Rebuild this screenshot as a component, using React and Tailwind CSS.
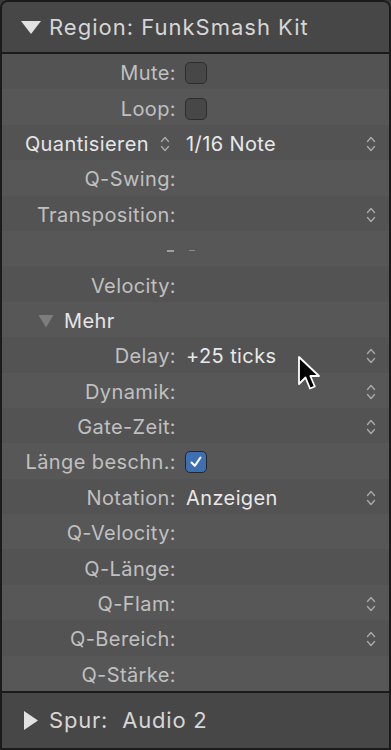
import React from 'react';

const font = { fontFamily: 'Inter, "Noto Sans", "Liberation Sans", sans-serif' };

function Stepper({ className = '' }) {
  return (
    <svg width="10" height="18" viewBox="0 0 10 18" className={className}>
      <path d="M1.5 6.5 L5 2.5 L8.5 6.5" fill="none" stroke="currentColor" strokeWidth="1.4" strokeLinecap="round" strokeLinejoin="round" />
      <path d="M1.5 11.5 L5 15.5 L8.5 11.5" fill="none" stroke="currentColor" strokeWidth="1.4" strokeLinecap="round" strokeLinejoin="round" />
    </svg>
  );
}

function Checkbox({ checked }) {
  if (checked) {
    return (
      <div className="w-[22px] h-[22px] rounded-[5px] bg-[#3e6fb3] border border-[#262626] flex items-center justify-center">
        <svg width="16" height="16" viewBox="0 0 16 16">
          <path d="M3.5 8.5 L6.8 11.8 L12.5 3.5" fill="none" stroke="#fff" strokeWidth="2.1" strokeLinecap="round" strokeLinejoin="round" />
        </svg>
      </div>
    );
  }
  return <div className="w-[22px] h-[22px] rounded-[5px] bg-[#474747] border border-[#2c2c2c]" />;
}

const rows = [
  { label: 'Mute:', check: false },
  { label: 'Loop:', check: false },
  { label: 'Quantisieren', labelStepper: true, value: '1/16 Note', stepper: true },
  { label: 'Q-Swing:' },
  { label: 'Transposition:', stepper: true },
  { dashes: true },
  { label: 'Velocity:' },
  { mehr: true },
  { label: 'Delay:', value: '+25 ticks', stepper: true, cursor: true },
  { label: 'Dynamik:', stepper: true },
  { label: 'Gate-Zeit:', stepper: true },
  { label: 'Länge beschn.:', check: true },
  { label: 'Notation:', value: 'Anzeigen', stepper: true },
  { label: 'Q-Velocity:' },
  { label: 'Q-Länge:' },
  { label: 'Q-Flam:', stepper: true },
  { label: 'Q-Bereich:', stepper: true },
  { label: 'Q-Stärke:' },
];

function Row({ row, index }) {
  const bg = index % 2 === 0 ? 'bg-[#535353]' : 'bg-[#575757]';
  if (row.mehr) {
    return (
      <div className={`h-[35.4px] pt-[3px] flex items-center ${bg}`}>
        <svg className="ml-[36px]" width="16" height="14" viewBox="0 0 16 14">
          <path d="M0.5 1 L15.5 1 L8 13.5 Z" fill="#7d7d7d" />
        </svg>
        <span className="ml-[10px] text-[20px] tracking-[0.4px] text-[#e6e6e6]">Mehr</span>
      </div>
    );
  }
  if (row.dashes) {
    return (
      <div className={`h-[35.4px] flex items-center ${bg}`}>
        <div className="w-[174px] flex justify-end pr-[2px]">
          <span className="block w-[7px] h-[2px] bg-[#a0a0a0] mt-[4px]" />
        </div>
        <span className="block ml-[13px] w-[6px] h-[1px] bg-[#8a8a8a] mt-[4px]" />
      </div>
    );
  }
  return (
    <div className={`relative h-[35.4px] pt-[3px] flex items-center ${bg}`}>
      <div className="w-[174px] flex items-center justify-end shrink-0">
        <span className={`text-[20px] tracking-[0.4px] ${row.labelStepper ? 'text-[#e6e6e6]' : 'text-[#c0c0c0]'}`}>{row.label}</span>
        {row.labelStepper && <Stepper className="ml-[11px] mr-[6px] text-[#a8a8a8]" />}
      </div>
      <div className="flex-1 flex items-center pl-[9px] pr-[13px]">
        {row.check !== undefined && <Checkbox checked={row.check} />}
        {row.value && <span className="ml-[1px] text-[20px] tracking-[0.4px] text-[#e8e8e8]">{row.value}</span>}
        {row.stepper && <Stepper className="ml-auto text-[#a8a8a8]" />}
      </div>
      {row.cursor && (
        <svg className="absolute left-[295px] top-[18px] z-10" width="28" height="38" viewBox="0 0 28 38">
          <path d="M2 2 L2 29 L8.5 22.5 L13 33.5 L17.8 31.5 L13.3 21 L22 21 Z" fill="#000" stroke="#fff" strokeWidth="1.8" strokeLinejoin="round" />
        </svg>
      )}
    </div>
  );
}

export default function App() {
  return (
    <div className="w-[391px] h-[750px] bg-[#3a3a3a]" style={font}>
      <div className="h-full flex flex-col border-2 border-[#1b1b1b] rounded-t-[8px] overflow-hidden">
        <div className="h-[52px] shrink-0 bg-[#474747] border-b-2 border-[#1b1b1b] flex items-center">
          <svg className="ml-[19px]" width="20" height="13" viewBox="0 0 20 13">
            <path d="M0 0 L20 0 L10 13 Z" fill="#e2e2e2" />
          </svg>
          <span className="ml-[8px] text-[22px] tracking-[1px] text-[#d6d6d6]">Region: FunkSmash Kit</span>
        </div>
        <div className="flex flex-col">
          {rows.map((r, i) => (
            <Row key={i} row={r} index={i} />
          ))}
        </div>
        <div className="flex-1 bg-[#474747] border-t-2 border-[#1b1b1b] flex items-center">
          <svg className="ml-[22px]" width="14" height="19" viewBox="0 0 14 19">
            <path d="M0 0 L14 9.5 L0 19 Z" fill="#e2e2e2" />
          </svg>
          <span className="ml-[11px] text-[22px] tracking-[0.8px] text-[#d6d6d6]">Spur:&nbsp; Audio 2</span>
        </div>
      </div>
    </div>
  );
}
